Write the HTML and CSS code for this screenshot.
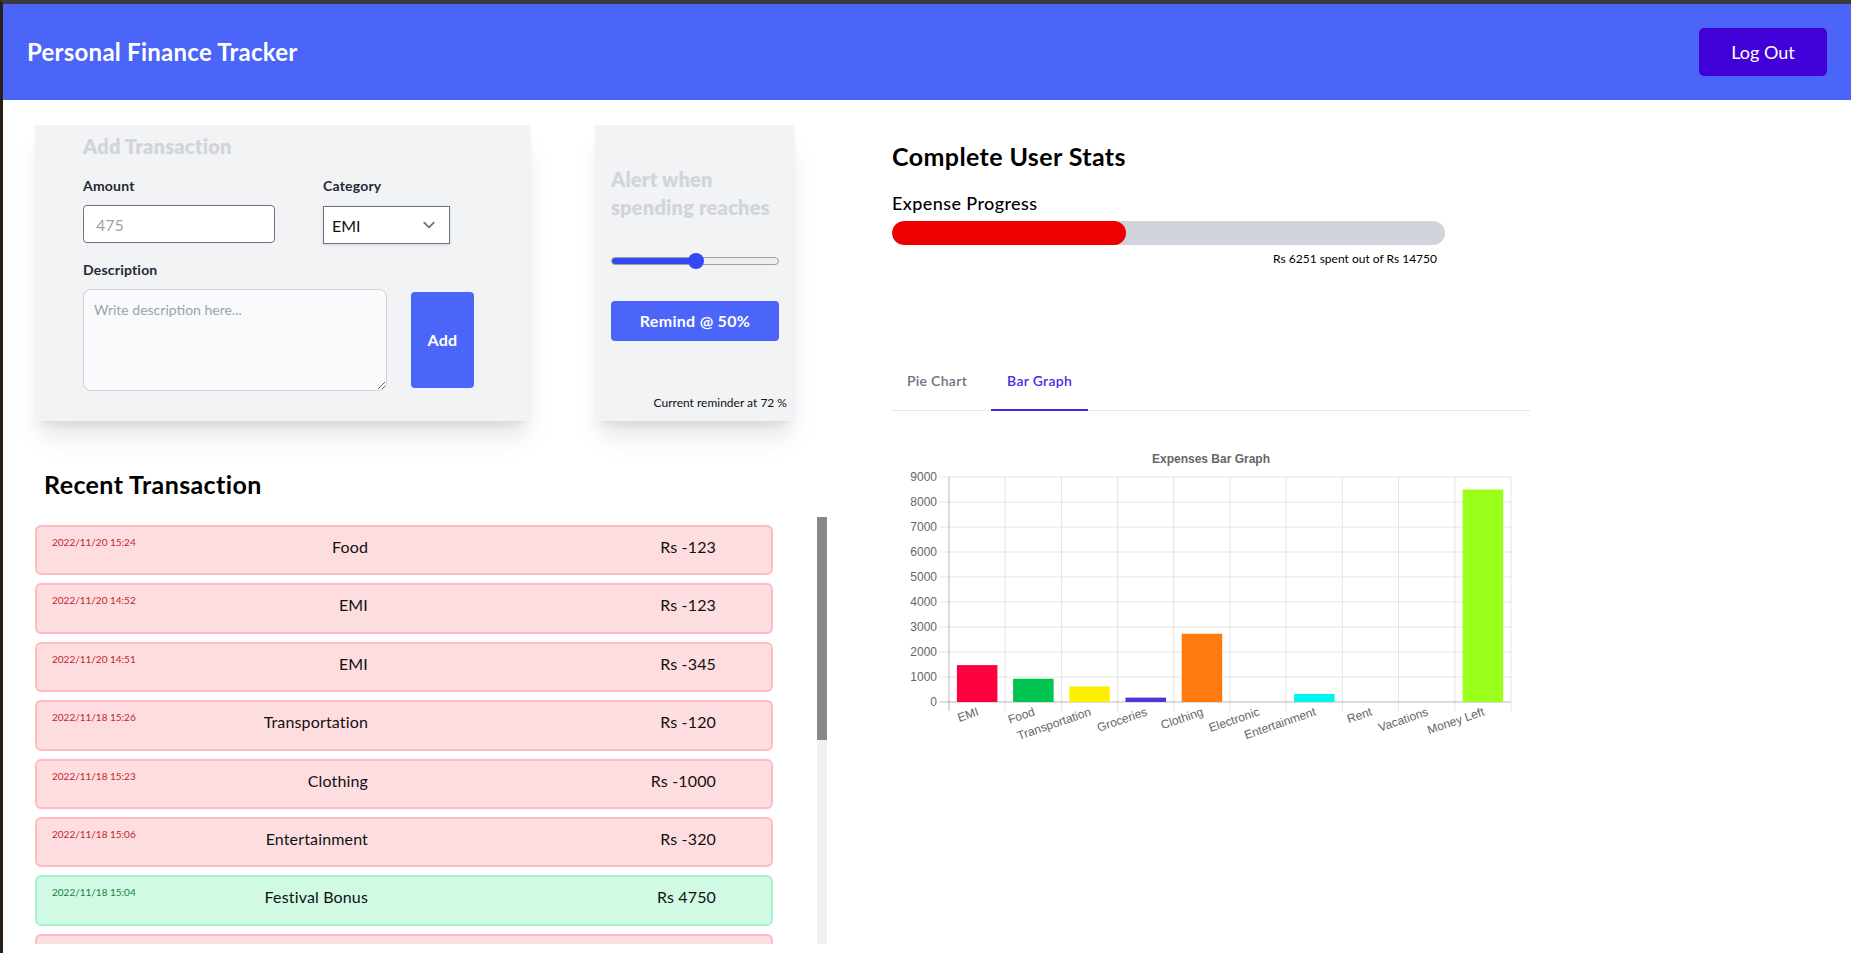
FILE: index.html
```html
<!DOCTYPE html>
<html lang="en">
<head>
<meta charset="utf-8">
<title>Personal Finance Tracker</title>
<link rel="stylesheet" href="styles.css">
</head>
<body>
<div class="app">
  <header class="topbar">
    <h1 class="brand">Personal Finance Tracker</h1>
    <button class="logout">Log Out</button>
  </header>
  <main class="main">
    <section class="left">
      <div class="cards">
        <div class="card add-card">
          <h3 class="card-title">Add Transaction</h3>
          <div class="form-row">
            <div class="field">
              <label class="label">Amount</label>
              <input class="input" placeholder="475">
            </div>
            <div class="field">
              <label class="label">Category</label>
              <div class="select">
                <span>EMI</span>
                <svg width="24" height="24" viewBox="0 0 20 20" fill="none"><path d="M6 8l4 4 4-4" stroke="#6b7280" stroke-width="1.5" stroke-linecap="round" stroke-linejoin="round"/></svg>
              </div>
            </div>
          </div>
          <label class="label desc-label">Description</label>
          <div class="desc-row">
            <textarea class="textarea" placeholder="Write description here..."></textarea>
            <button class="btn add-btn">Add</button>
          </div>
        </div>
        <div class="card alert-card">
          <h3 class="card-title">Alert when spending reaches</h3>
          <div class="slider">
            <div class="slider-track"><div class="slider-fill"></div></div>
            <div class="slider-thumb"></div>
          </div>
          <button class="btn remind-btn">Remind @ 50%</button>
          <p class="reminder-note">Current reminder at 72 %</p>
        </div>
      </div>
      <h2 class="recent-title">Recent Transaction</h2>
      <div class="tx-wrap">
        <div class="tx-list">
          <div class="tx"><span class="tx-date">2022/11/20 15:24</span><span class="tx-cat">Food</span><span class="tx-amt">Rs -123</span></div>
          <div class="tx"><span class="tx-date">2022/11/20 14:52</span><span class="tx-cat">EMI</span><span class="tx-amt">Rs -123</span></div>
          <div class="tx"><span class="tx-date">2022/11/20 14:51</span><span class="tx-cat">EMI</span><span class="tx-amt">Rs -345</span></div>
          <div class="tx"><span class="tx-date">2022/11/18 15:26</span><span class="tx-cat">Transportation</span><span class="tx-amt">Rs -120</span></div>
          <div class="tx"><span class="tx-date">2022/11/18 15:23</span><span class="tx-cat">Clothing</span><span class="tx-amt">Rs -1000</span></div>
          <div class="tx"><span class="tx-date">2022/11/18 15:06</span><span class="tx-cat">Entertainment</span><span class="tx-amt">Rs -320</span></div>
          <div class="tx income"><span class="tx-date">2022/11/18 15:04</span><span class="tx-cat">Festival Bonus</span><span class="tx-amt">Rs 4750</span></div>
          <div class="tx"></div>
        </div>
        <div class="scrollbar"><div class="scroll-thumb"></div></div>
      </div>
    </section>

    <section class="right">
      <h2 class="stats-title">Complete User Stats</h2>
      <p class="progress-label">Expense Progress</p>
      <div class="progress"><div class="progress-fill" style="width:42.38%"></div></div>
      <p class="progress-text">Rs 6251 spent out of Rs 14750</p>
      <ul class="tabs">
        <li class="tab">Pie Chart</li>
        <li class="tab active">Bar Graph</li>
      </ul>
      <svg class="chart" width="638" height="320" viewBox="0 0 638 320">
        <text class="chart-title" x="319" y="23" text-anchor="middle">Expenses Bar Graph</text>
        <g class="grid">
          <line x1="48" y1="37" x2="619" y2="37"/>
          <line x1="48" y1="62" x2="619" y2="62"/>
          <line x1="48" y1="87" x2="619" y2="87"/>
          <line x1="48" y1="112" x2="619" y2="112"/>
          <line x1="48" y1="137" x2="619" y2="137"/>
          <line x1="48" y1="162" x2="619" y2="162"/>
          <line x1="48" y1="187" x2="619" y2="187"/>
          <line x1="48" y1="212" x2="619" y2="212"/>
          <line x1="48" y1="237" x2="619" y2="237"/>
          <line x1="113.2" y1="37" x2="113.2" y2="271"/>
          <line x1="169.4" y1="37" x2="169.4" y2="271"/>
          <line x1="225.6" y1="37" x2="225.6" y2="271"/>
          <line x1="281.8" y1="37" x2="281.8" y2="271"/>
          <line x1="338" y1="37" x2="338" y2="271"/>
          <line x1="394.2" y1="37" x2="394.2" y2="271"/>
          <line x1="450.4" y1="37" x2="450.4" y2="271"/>
          <line x1="506.6" y1="37" x2="506.6" y2="271"/>
          <line x1="562.8" y1="37" x2="562.8" y2="271"/>
          <line x1="619" y1="37" x2="619" y2="271"/>
        </g>
        <g class="axis">
          <line x1="57" y1="37" x2="57" y2="271"/>
          <line x1="48" y1="262" x2="619" y2="262"/>
        </g>
        <g class="ylabels" text-anchor="end">
          <text x="45" y="37" dy=".35em">9000</text>
          <text x="45" y="62" dy=".35em">8000</text>
          <text x="45" y="87" dy=".35em">7000</text>
          <text x="45" y="112" dy=".35em">6000</text>
          <text x="45" y="137" dy=".35em">5000</text>
          <text x="45" y="162" dy=".35em">4000</text>
          <text x="45" y="187" dy=".35em">3000</text>
          <text x="45" y="212" dy=".35em">2000</text>
          <text x="45" y="237" dy=".35em">1000</text>
          <text x="45" y="262" dy=".35em">0</text>
        </g>
        <g class="bars">
          <rect x="64.9" y="225.1" width="40.5" height="36.9" fill="#ff0040"/>
          <rect x="121.1" y="238.75" width="40.5" height="23.25" fill="#00c450"/>
          <rect x="177.3" y="246.5" width="40.5" height="15.5" fill="#ffee00"/>
          <rect x="233.5" y="257.6" width="40.5" height="4.4" fill="#5533d6"/>
          <rect x="289.7" y="193.75" width="40.5" height="68.25" fill="#ff7b0f"/>
          <rect x="402.1" y="254" width="40.5" height="8" fill="#00f5ee"/>
          <rect x="570.7" y="49.5" width="40.5" height="212.5" fill="#9aff1a"/>
        </g>
        <g class="xlabels" text-anchor="end">
          <text x="86" y="271" dy=".35em" transform="rotate(-19 86 271)">EMI</text>
          <text x="142.2" y="271" dy=".35em" transform="rotate(-19 142.2 271)">Food</text>
          <text x="198.4" y="271" dy=".35em" transform="rotate(-19 198.4 271)">Transportation</text>
          <text x="254.6" y="271" dy=".35em" transform="rotate(-19 254.6 271)">Groceries</text>
          <text x="310.8" y="271" dy=".35em" transform="rotate(-19 310.8 271)">Clothing</text>
          <text x="367" y="271" dy=".35em" transform="rotate(-19 367 271)">Electronic</text>
          <text x="423.2" y="271" dy=".35em" transform="rotate(-19 423.2 271)">Entertainment</text>
          <text x="479.4" y="271" dy=".35em" transform="rotate(-19 479.4 271)">Rent</text>
          <text x="535.6" y="271" dy=".35em" transform="rotate(-19 535.6 271)">Vacations</text>
          <text x="591.8" y="271" dy=".35em" transform="rotate(-19 591.8 271)">Money Left</text>
        </g>
      </svg>
    </section>
  </main>
</div>
</body>
</html>
```

FILE: styles.css
```css
* { box-sizing: border-box; }
html, body { margin: 0; padding: 0; }
body {
  font-family: Lato, "Noto Sans", sans-serif;
  background: #fff;
  color: #111827;
  overflow: hidden;
}
.app {
  height: 953px;
  border-top: 4px solid #3a3a3a;
  border-left: 3px solid #2a1f17;
  overflow: hidden;
}

/* header */
.topbar {
  height: 96px;
  background: #4a65f8;
  display: flex;
  align-items: center;
  justify-content: space-between;
  padding: 0 24px;
}
.brand {
  margin: 0;
  font-size: 24px;
  line-height: 32px;
  font-weight: 700;
  letter-spacing: .25px;
  color: #fff;
}
.logout {
  width: 128px;
  height: 48px;
  background: #4200d9;
  color: #fff;
  border: 0;
  border-radius: 5px;
  font-family: Lato, sans-serif;
  font-size: 18px;
  line-height: 24px;
}

/* main */
.main {
  display: flex;
  gap: 65px;
  padding: 25px 0 0 32px;
}
.left {
  width: 792px;
  display: flex;
  flex-direction: column;
}
.cards {
  display: flex;
  gap: 64px;
}
.card {
  height: 296px;
  background: #f2f3f5;
  box-shadow: 0 20px 25px -5px rgba(0,0,0,.1), 0 8px 10px -6px rgba(0,0,0,.1);
}
.card-title {
  margin: 0;
  font-size: 20px;
  line-height: 28px;
  font-weight: 800;
  letter-spacing: .2px;
  color: #d1d5db;
}
.add-card {
  width: 496px;
  padding: 7px 48px 0;
}
.form-row {
  display: flex;
  gap: 48px;
  margin-top: 16px;
}
.label {
  display: block;
  font-size: 14px;
  line-height: 20px;
  font-weight: 700;
  letter-spacing: .2px;
  color: #1f2937;
}
.input {
  display: block;
  margin-top: 9px;
  width: 192px;
  height: 38px;
  border: 1px solid #6b7280;
  border-radius: 4px;
  padding: 0 12px;
  background: #fff;
  font-family: Lato, sans-serif;
  font-size: 16px;
  color: #111;
}
.input::placeholder { color: #9ca3af; }
.select {
  margin-top: 10px;
  width: 127px;
  height: 38px;
  border: 1px solid #6b7280;
  background: #fff;
  display: flex;
  align-items: center;
  justify-content: space-between;
  padding: 0 8px;
  font-size: 16px;
  color: #111;
  box-shadow: 0 1px 3px rgba(0,0,0,.12);
}
.desc-label { margin-top: 16px; }
.desc-row {
  display: flex;
  align-items: center;
  gap: 24px;
  margin-top: 9px;
}
.textarea {
  width: 304px;
  height: 102px;
  border: 1px solid #d1d5db;
  border-radius: 8px;
  background: #f9fafb;
  padding: 10px;
  font-family: Lato, sans-serif;
  font-size: 14px;
  line-height: 20px;
  resize: vertical;
}
.textarea::placeholder { color: #9ca3af; }
.btn {
  background: #4a65f8;
  color: #fff;
  border: 0;
  border-radius: 4px;
  font-family: Lato, sans-serif;
  font-weight: 700;
  font-size: 16px;
  line-height: 24px;
  letter-spacing: .3px;
}
.add-btn { width: 63px; height: 96px; }

/* alert card */
.alert-card {
  width: 200px;
  padding: 40px 16px 10px;
  display: flex;
  flex-direction: column;
}
.slider {
  position: relative;
  height: 16px;
  margin-top: 32px;
  display: flex;
  align-items: center;
}
.slider-track {
  flex: 1;
  height: 8px;
  border: 1px solid #9e9e9e;
  border-radius: 4px;
  background: #efefef;
  overflow: hidden;
}
.slider-fill {
  width: 85px;
  height: 100%;
  background: #3448f6;
}
.slider-thumb {
  position: absolute;
  top: 0;
  left: 77px;
  width: 16px;
  height: 16px;
  border-radius: 50%;
  background: #3448f6;
}
.remind-btn {
  margin-top: 32px;
  width: 100%;
  height: 40px;
}
.reminder-note {
  margin: auto -8px 0 0;
  align-self: flex-end;
  font-size: 12px;
  line-height: 16px;
  color: #111;
}

/* recent transactions */
.recent-title {
  margin: 46px 0 0;
  padding-left: 9px;
  font-size: 25px;
  line-height: 34px;
  font-weight: 700;
  letter-spacing: .4px;
  color: #000;
}
.tx-wrap {
  display: flex;
  margin-top: 16px;
  height: 427px;
}
.tx-list {
  width: 782px;
  overflow: hidden;
  padding: 8px 44px 0 0;
  display: flex;
  flex-direction: column;
  gap: 8px;
}
.scrollbar {
  width: 10px;
  background: #f1f1f1;
}
.scroll-thumb {
  height: 223px;
  background: #888;
}
.tx {
  flex-shrink: 0;
  height: 50.4px;
  border: 2px solid #fdbdc0;
  border-radius: 6px;
  background: #fedde1;
  display: grid;
  grid-template-columns: 120px 196px 1fr;
  align-items: start;
  padding: 8px 55px 8px 15px;
}
.tx-date {
  font-size: 10px;
  line-height: 15px;
  color: #c0262d;
}
.tx-cat, .tx-amt {
  text-align: right;
  font-size: 16px;
  line-height: 24px;
  letter-spacing: .15px;
  color: #111;
}
.tx.income {
  background: #d1fae5;
  border-color: #a7f3d0;
}
.tx.income .tx-date { color: #15803d; }

/* right column */
.right {
  width: 638px;
  padding-top: 14px;
}
.stats-title {
  margin: 0;
  font-size: 25px;
  line-height: 34px;
  font-weight: 700;
  letter-spacing: .4px;
  color: #000;
}
.progress-label {
  margin: 16px 0 0;
  font-size: 18px;
  line-height: 28px;
  font-weight: 500;
  letter-spacing: .4px;
  color: #000;
}
.progress {
  margin-top: 4px;
  width: 553px;
  height: 24px;
  border-radius: 12px;
  background: #d1d5db;
  overflow: hidden;
}
.progress-fill {
  height: 100%;
  background: #ef0000;
  border-radius: 12px;
}
.progress-text {
  width: 553px;
  margin: 6px 0 0;
  padding-right: 8px;
  text-align: right;
  font-size: 12px;
  line-height: 16px;
  color: #000;
}
.tabs {
  list-style: none;
  display: flex;
  gap: 8px;
  margin: 88px 0 0 -1px;
  padding: 0;
  border-bottom: 1px solid #e5e7eb;
}
.tab {
  padding: 16px 16px 18px;
  margin-bottom: -1px;
  font-size: 14px;
  line-height: 20px;
  font-weight: 600;
  letter-spacing: .3px;
  color: #6b7280;
  border-bottom: 2px solid transparent;
}
.tab.active {
  color: #4c2be6;
  border-bottom-color: #4b23e4;
}
.chart {
  display: block;
  margin-top: 29px;
  font-family: "Liberation Sans", Arial, sans-serif;
}
.chart-title {
  font-size: 12px;
  font-weight: 700;
  fill: #666;
}
.grid line { stroke: rgba(0,0,0,.1); stroke-width: 1; }
.axis line { stroke: rgba(0,0,0,.28); stroke-width: 1; }
.ylabels text, .xlabels text {
  font-size: 12px;
  fill: #666;
}
```
